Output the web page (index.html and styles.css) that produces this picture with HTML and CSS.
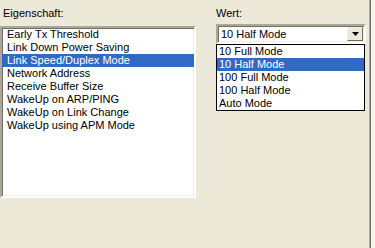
FILE: index.html
```html
<!DOCTYPE html>
<html lang="de">

<head>
    <meta charset="UTF-8">
    <meta name="viewport" content="width=device-width, initial-scale=1.0">
    <title>Erweitert</title>
    <link rel="stylesheet" href="styles.css">
</head>

<body>
    <div class="panel">
        <div class="col-left">
            <label class="caption">Eigenschaft:</label>
            <ul class="listbox">
                <li>Early Tx Threshold</li>
                <li>Link Down Power Saving</li>
                <li class="selected">Link Speed/Duplex Mode</li>
                <li>Network Address</li>
                <li>Receive Buffer Size</li>
                <li>WakeUp on ARP/PING</li>
                <li>WakeUp on Link Change</li>
                <li>WakeUp using APM Mode</li>
            </ul>
        </div>

        <div class="col-right">
            <label class="caption">Wert:</label>
            <div class="combo">
                <span class="combo-value">10 Half Mode</span>
                <span class="combo-button">
                    <svg width="7" height="4" viewBox="0 0 7 4"><path d="M0 0h7L3.5 4z" fill="#000"/></svg>
                </span>
                <!-- aufgeklappte Liste -->
                <ul class="dropdown">
                    <li>10 Full Mode</li>
                    <li class="selected">10 Half Mode</li>
                    <li>100 Full Mode</li>
                    <li>100 Half Mode</li>
                    <li>Auto Mode</li>
                </ul>
            </div>
        </div>
    </div>
</body>

</html>
```

FILE: styles.css
```css
body {
    margin: 0;
    background: #f4f3ee;
    font-family: 'Liberation Sans', Arial, sans-serif;
    font-size: 11px;
    color: #000;
    width: 375px;
    height: 248px;
    overflow: hidden;
}

.panel {
    width: 369px;
    height: 248px;
    background: #ece9d8;
    border-right: 1px solid #aca899;
    box-shadow: 1px 0 0 #716f64;
    display: flex;
    gap: 20px;
}

.caption {
    display: block;
    line-height: 13px;
    padding-top: 7px;
    height: 19px;
}

.col-left {
    width: 196px;
}

.col-left .caption {
    padding-left: 3px;
}

.listbox {
    list-style: none;
    margin: 0;
    padding: 0;
    height: 168px;
    background: #fff;
    border: 2px solid;
    border-color: #aca899 #fff #fff #aca899;
    box-shadow: inset 1px 1px 0 #716f64, inset -1px -1px 0 #f1efe2;
}

.listbox li {
    height: 13px;
    line-height: 13px;
    padding-left: 5px;
    white-space: nowrap;
}

.selected {
    background: #316ac5;
    color: #fff;
}

.col-right {
    width: 150px;
}

.col-right .caption {
    height: 17px;
}

.combo {
    position: relative;
    height: 20px;
    box-sizing: border-box;
    background: #fff;
    border: 2px solid;
    border-color: #aca899 #fff #fff #aca899;
    box-shadow: inset 1px 1px 0 #716f64, inset -1px -1px 0 #f1efe2;
    display: flex;
    align-items: center;
    padding: 1px 1px 1px 3px;
}

.combo-value {
    flex: 1;
    line-height: 13px;
}

.combo-button {
    width: 16px;
    height: 14px;
    box-sizing: border-box;
    background: #ece9d8;
    border: 1px solid;
    border-color: #f1efe2 #716f64 #716f64 #f1efe2;
    display: flex;
    align-items: center;
    justify-content: center;
}

.dropdown {
    position: absolute;
    top: 18px;
    left: -2px;
    width: 147px;
    list-style: none;
    margin: 0;
    padding: 0;
    background: #fff;
    border: 1px solid #000;
}

.dropdown li {
    height: 13px;
    line-height: 13px;
    padding-left: 2px;
}
```
